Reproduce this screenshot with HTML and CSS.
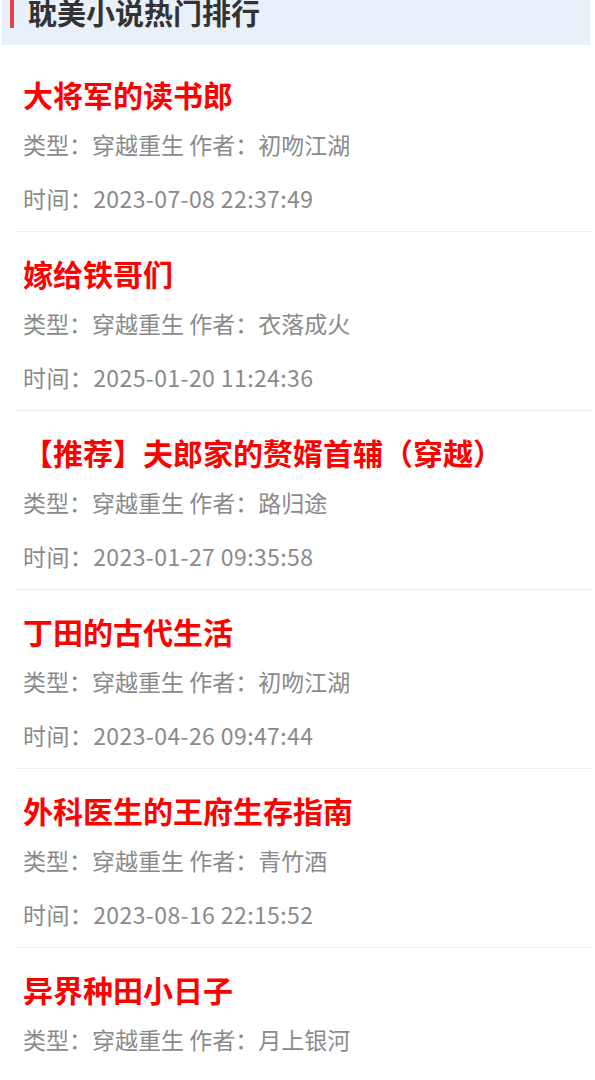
FILE: index.html
```html
<!DOCTYPE html>
<html lang="zh-CN">
<head>
    <meta charset="UTF-8">
    <meta name="viewport" content="width=device-width, initial-scale=1.0">
    <title>耽美小说热门排行</title>
    <link rel="stylesheet" href="styles.css">
</head>
<body>
    <div class="head">
        <h2 class="head-title">耽美小说热门排行</h2>
    </div>
    <ul class="rank-list">
        <li class="rank-item">
            <h3 class="book-name">大将军的读书郎</h3>
            <p class="book-info">类型：穿越重生 作者：初吻江湖</p>
            <p class="book-info book-time">时间：2023-07-08 22:37:49</p>
        </li>
        <li class="rank-item">
            <h3 class="book-name">嫁给铁哥们</h3>
            <p class="book-info">类型：穿越重生 作者：衣落成火</p>
            <p class="book-info book-time">时间：2025-01-20 11:24:36</p>
        </li>
        <li class="rank-item">
            <h3 class="book-name">【推荐】夫郎家的赘婿首辅（穿越）</h3>
            <p class="book-info">类型：穿越重生 作者：路归途</p>
            <p class="book-info book-time">时间：2023-01-27 09:35:58</p>
        </li>
        <li class="rank-item">
            <h3 class="book-name">丁田的古代生活</h3>
            <p class="book-info">类型：穿越重生 作者：初吻江湖</p>
            <p class="book-info book-time">时间：2023-04-26 09:47:44</p>
        </li>
        <li class="rank-item">
            <h3 class="book-name">外科医生的王府生存指南</h3>
            <p class="book-info">类型：穿越重生 作者：青竹酒</p>
            <p class="book-info book-time">时间：2023-08-16 22:15:52</p>
        </li>
        <li class="rank-item">
            <h3 class="book-name">异界种田小日子</h3>
            <p class="book-info">类型：穿越重生 作者：月上银河</p>
        </li>
    </ul>
</body>
</html>
```

FILE: styles.css
```css
body {
    margin: 0;
    padding: 0;
    background: #fff;
    font-family: "Noto Sans CJK SC", "Noto Sans", sans-serif;
}

.head {
    margin: 0 5px 0 2px;
    height: 45px;
    padding-left: 8px;
    background: #e8f0fa;
    overflow: hidden;
}

.head-title {
    margin: -3px 0 0;
    padding-left: 14px;
    border-left: 4px solid #e8404a;
    font-size: 29px;
    line-height: 31px;
    font-weight: 700;
    color: #333;
}

.rank-list {
    list-style: none;
    margin: 8px 3px 0 16px;
    padding: 0;
}

.rank-item {
    padding: 18px 0 6px 7px;
    border-bottom: 1px solid #eeeeee;
}

.rank-item:last-child {
    border-bottom: none;
}

.book-name {
    margin: 0;
    font-size: 30px;
    line-height: 46px;
    font-weight: 700;
    color: #f00;
}

.book-info {
    margin: 0;
    font-size: 23px;
    line-height: 54px;
    color: #8a8a8a;
}

.book-time {
    letter-spacing: 0.4px;
}
```
